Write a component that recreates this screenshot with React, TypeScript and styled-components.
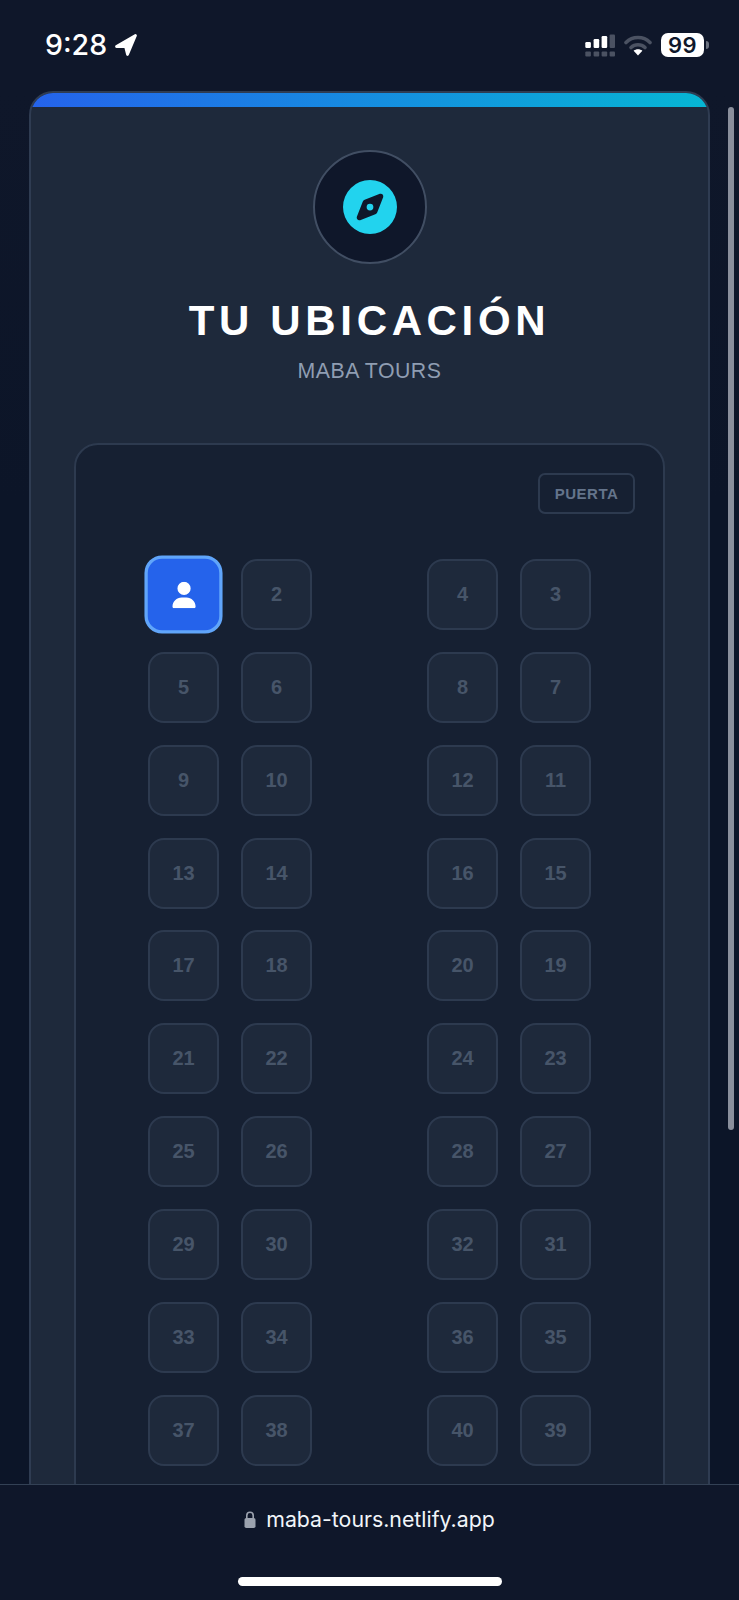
import React from 'react'
import styled, { createGlobalStyle } from 'styled-components'
import { FaCompass, FaUser } from 'react-icons/fa6'

const GlobalStyle = createGlobalStyle`
  html, body {
    margin: 0;
    padding: 0;
    background: #0f172a;
  }
  * {
    box-sizing: border-box;
  }
`

const Frame = styled.div`
  position: relative;
  width: 739px;
  height: 1600px;
  display: flex;
  flex-direction: column;
  overflow: hidden;
  background: linear-gradient(180deg, #0f172a 0, #0f172a 90px, #0c1528 500px);
  font-family: 'Liberation Sans', Arial, sans-serif;
`

const Viewport = styled.div`
  flex: 1;
  min-height: 0;
  overflow: hidden;
`

const StatusBar = styled.div`
  height: 91px;
  display: flex;
  justify-content: space-between;
  align-items: flex-start;
  padding: 29px 35px 0 45px;
`

const Clock = styled.div`
  display: flex;
  align-items: center;
  gap: 7px;
  height: 32px;
  color: #fff;
  font-family: Inter, sans-serif;
  font-size: 28.5px;
  font-weight: 500;
  line-height: 32px;
`

const StatusIcons = styled.div`
  display: flex;
  align-items: center;
  gap: 9px;
  height: 32px;
`

const Battery = styled.div`
  position: relative;
  width: 43px;
  height: 24px;
  display: flex;
  align-items: center;
  justify-content: center;
  border-radius: 7px;
  background: #fff;
  color: #0f172a;
  font-family: Inter, sans-serif;
  font-size: 22px;
  font-weight: 600;
  letter-spacing: 0.5px;

  &::after {
    content: '';
    position: absolute;
    left: 45px;
    top: 8px;
    width: 3px;
    height: 8px;
    border-radius: 0 3px 3px 0;
    background: #6b7280;
  }
`

const Card = styled.div`
  margin: 0 29px;
  border: 2px solid #2f3c52;
  border-radius: 24px;
  overflow: hidden;
  background: #1e293b;
`

const TopStripe = styled.div`
  height: 14px;
  background: linear-gradient(90deg, #2563eb, #06b6d4);
`

const CardBody = styled.div`
  display: flex;
  flex-direction: column;
  align-items: center;
  padding: 43px 43px 40px;
`

const IconCircle = styled.div`
  width: 114px;
  height: 114px;
  display: flex;
  align-items: center;
  justify-content: center;
  border: 2px solid #414e63;
  border-radius: 50%;
  background: #0f172a;
  color: #22d3ee;
  font-size: 54px;
`

const Title = styled.h1`
  margin: 32px 0 0;
  color: #fff;
  font-size: 42px;
  font-weight: 700;
  line-height: 50px;
  letter-spacing: 4.65px;
`

const Subtitle = styled.div`
  margin-top: 12px;
  color: #8f9db2;
  font-size: 21.3px;
  line-height: 26px;
  letter-spacing: 0.5px;
`

const Panel = styled.div`
  align-self: stretch;
  margin-top: 59px;
  padding: 28px 28px 70px;
  border: 2px solid #2d3a4f;
  border-radius: 24px;
  background: #162032;
`

const DoorRow = styled.div`
  display: flex;
  justify-content: flex-end;
  margin-bottom: 45px;
`

const Door = styled.div`
  width: 97px;
  height: 41px;
  display: flex;
  align-items: center;
  justify-content: center;
  border: 2px solid #2d3a4f;
  border-radius: 7px;
  color: #64748b;
  font-size: 15px;
  font-weight: 700;
  letter-spacing: 0.5px;
`

const SeatGrid = styled.div`
  display: grid;
  grid-template-columns: repeat(5, 71px);
  grid-auto-rows: 71px;
  gap: 21.87px 22px;
  justify-content: center;
`

const Seat = styled.div<{ $selected?: boolean }>`
  display: flex;
  align-items: center;
  justify-content: center;
  border: ${({ $selected }) => ($selected ? '3px solid #60a5fa' : '2px solid #2d3a4f')};
  border-radius: 16px;
  background: ${({ $selected }) => ($selected ? '#2563eb' : '#1e293b')};
  color: ${({ $selected }) => ($selected ? '#fff' : '#475569')};
  font-size: 20px;
  font-weight: 700;
  transform: ${({ $selected }) => ($selected ? 'scale(1.1)' : 'none')};
`

const Aisle = styled.div``

const ScrollThumb = styled.div`
  position: absolute;
  top: 107px;
  right: 5px;
  width: 6px;
  height: 1023px;
  border-radius: 3px;
  background: #8a8f9c;
`

const BottomBar = styled.div`
  position: relative;
  height: 116px;
  display: flex;
  justify-content: center;
  padding-top: 19px;
  border-top: 1px solid #334155;
  background: #0f172a;
`

const Address = styled.div`
  display: flex;
  align-items: center;
  gap: 10px;
  height: 30px;
  color: #f1f5f9;
  font-family: Inter, sans-serif;
  font-size: 21.3px;
`

const HomeIndicator = styled.div`
  position: absolute;
  left: 238px;
  bottom: 14px;
  width: 264px;
  height: 9px;
  border-radius: 5px;
  background: #fff;
`

const LocationArrow = () => (
  <svg width="24" height="24" viewBox="0 0 24 24">
    <path d="M21.5 2.5 2.5 13.5H11.5L13.5 21.5Z" fill="#fff" stroke="#fff" strokeWidth="2.8" strokeLinejoin="round" />
  </svg>
)

const SignalIcon = () => (
  <svg width="30" height="24" viewBox="0 0 30 24">
    <rect x="0.3" y="9" width="5.6" height="6" rx="1.2" fill="#fff" />
    <rect x="8.6" y="6" width="5.6" height="9" rx="1.2" fill="#fff" />
    <rect x="16.6" y="3" width="5.6" height="12" rx="1.2" fill="#fff" />
    <rect x="24.6" y="1.5" width="5.4" height="13.5" rx="1" fill="#4b5262" />
    <rect x="0.3" y="18.5" width="5.6" height="5" rx="1" fill="#4b5262" />
    <rect x="8.6" y="18.5" width="5.6" height="5" rx="1" fill="#4b5262" />
    <rect x="16.6" y="18.5" width="5.6" height="5" rx="1" fill="#4b5262" />
    <rect x="24.6" y="18.5" width="5.4" height="5" rx="1" fill="#4b5262" />
  </svg>
)

const WifiIcon = () => (
  <svg width="28" height="22" viewBox="0 0 28 22" fill="none">
    <path d="M2 8.5C8.6 1.9 19.4 1.9 26 8.5" stroke="#4b5262" strokeWidth="3.6" strokeLinecap="round" />
    <path d="M7 13.5C10.8 9.8 17.2 9.8 21 13.5" stroke="#4b5262" strokeWidth="3.6" strokeLinecap="round" />
    <path d="M9.6 16.8C12.2 14.8 15.8 14.8 18.4 16.8L14 21.4Z" fill="#fff" />
  </svg>
)

const LockIcon = () => (
  <svg width="12" height="17" viewBox="0 0 12 17" fill="none">
    <path d="M2.8 8V4.4C2.8 2.5 4.2 1.2 6 1.2S9.2 2.5 9.2 4.4V8" stroke="#9ca3af" strokeWidth="1.6" />
    <rect x="0.5" y="7" width="11" height="10" rx="1.8" fill="#9ca3af" />
  </svg>
)

const rows = Array.from({ length: 10 }, (_, i) => 4 * i + 1)

const App = () => {
  return (
    <Frame>
      <GlobalStyle />
      <Viewport>
        <StatusBar>
          <Clock>
            9:28
            <LocationArrow />
          </Clock>
          <StatusIcons>
            <SignalIcon />
            <WifiIcon />
            <Battery>99</Battery>
          </StatusIcons>
        </StatusBar>
        <Card>
          <TopStripe />
          <CardBody>
            <IconCircle>
              <FaCompass />
            </IconCircle>
            <Title>TU UBICACIÓN</Title>
            <Subtitle>MABA TOURS</Subtitle>
            <Panel>
              <DoorRow>
                <Door>PUERTA</Door>
              </DoorRow>
              <SeatGrid>
                {rows.map((n) => (
                  <React.Fragment key={n}>
                    <Seat $selected={n === 1}>{n === 1 ? <FaUser size={24} /> : n}</Seat>
                    <Seat>{n + 1}</Seat>
                    <Aisle />
                    <Seat>{n + 3}</Seat>
                    <Seat>{n + 2}</Seat>
                  </React.Fragment>
                ))}
              </SeatGrid>
            </Panel>
          </CardBody>
        </Card>
      </Viewport>
      <ScrollThumb />
      <BottomBar>
        <Address>
          <LockIcon />
          maba-tours.netlify.app
        </Address>
        <HomeIndicator />
      </BottomBar>
    </Frame>
  )
}

export default App
